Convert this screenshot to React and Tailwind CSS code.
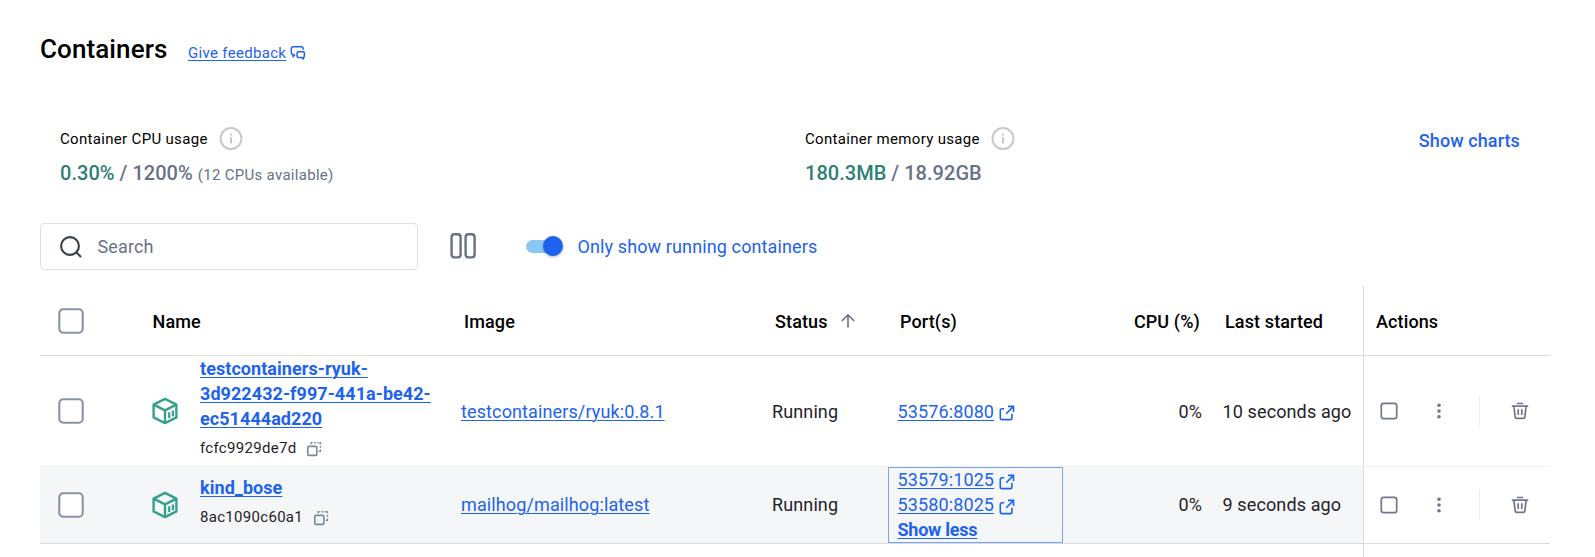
function FeedbackIcon() {
  return (
    <svg className="h-[16px] w-[16px]" viewBox="0 0 16 16" fill="none" stroke="#1d63ed" strokeWidth="1.5" strokeLinejoin="round">
      <path d="M5.2 9.8H4.8L3 11.8V9.6C2 9.4 1.3 8.8 1.3 7.8V3.5C1.3 2.4 1.9 1.8 3 1.8H11.4C12.5 1.8 13.1 2.4 13.1 3.5V4.8" />
      <path d="M8.3 6.8H13.2C14 6.8 14.4 7.2 14.4 8V11C14.4 11.7 14.1 12.1 13.5 12.3V14L11.4 12.4H8.3C7.5 12.4 7.1 12 7.1 11.2V8C7.1 7.2 7.5 6.8 8.3 6.8Z" />
    </svg>
  );
}

function InfoIcon() {
  return (
    <svg className="-mt-px h-[24px] w-[24px]" viewBox="0 0 24 24" fill="none" stroke="#c9c9c9">
      <circle cx="12" cy="11.6" r="10.5" strokeWidth="2" />
      <path d="M12 10.2V16.6" strokeWidth="2" />
      <path d="M12 6.4V8.4" strokeWidth="2" />
    </svg>
  );
}

function SearchIcon() {
  return (
    <svg className="h-[24px] w-[24px]" viewBox="0 0 24 24" fill="none" stroke="#393f49" strokeWidth="2.1">
      <circle cx="11" cy="11" r="8.9" />
      <path d="M17.2 17.2L22 22" />
    </svg>
  );
}

function ColumnsIcon() {
  return (
    <svg className="-mt-px h-[28px] w-[28px]" viewBox="0 0 28 28" fill="none" stroke="#677285" strokeWidth="2.4">
      <rect x="2.6" y="2.2" width="9" height="23.2" rx="2.8" />
      <rect x="16.6" y="2.2" width="9" height="23.2" rx="2.8" />
    </svg>
  );
}

function ArrowUp() {
  return (
    <svg className="-mt-px h-[16px] w-[16px]" viewBox="0 0 16 16" fill="none" stroke="#677285" strokeWidth="1.6">
      <path d="M8 14.6V1.8M1.8 8L8 1.8L14.2 8" />
    </svg>
  );
}

function CubeIcon() {
  return (
    <svg className="h-[28px] w-[28px]" viewBox="0 0 28 28" fill="none" stroke="#35a18b" strokeWidth="2.4" strokeLinejoin="round">
      <path d="M14 1.9L25.4 7.6V20.4L14 26.1L2.6 20.4V7.6Z" />
      <path d="M2.6 7.6L14 13.4L25.4 7.6M14 13.4V26.1" />
      <path d="M18.2 15.3V21M21.9 13.5V19.2" strokeWidth="2.2" />
    </svg>
  );
}

function CopyIcon() {
  return (
    <svg className="h-[16px] w-[16px]" viewBox="0 0 16 16" fill="none" stroke="#7d8798" strokeWidth="1.6">
      <rect x="1.8" y="5.4" width="9" height="9" rx="1" />
      <path d="M5.2 3.2V1.8H6.6M8.2 1.8H9.8M11.2 1.8H12.6M13.4 1.8H14.4V3.4M14.4 5V6.8M14.4 8.4V10.4H12.8" strokeWidth="1.4" />
    </svg>
  );
}

function ExternalIcon() {
  return (
    <svg className="h-[16px] w-[16px]" viewBox="0 0 16 16" fill="none" stroke="#1d63ed" strokeWidth="1.6">
      <path d="M5.2 3.7H3C1.9 3.7 1.3 4.3 1.3 5.4V12.9C1.3 14 1.9 14.6 3 14.6H11.2C12.3 14.6 12.9 14 12.9 12.9V8.8" />
      <path d="M9 1.4H14.5V7M14.5 1.4L7.2 8.7" />
    </svg>
  );
}

function TrashIcon() {
  return (
    <svg className="h-[18px] w-[18px]" viewBox="0 0 18 18" fill="none" stroke="#6f798b" strokeWidth="1.7">
      <path d="M0.8 4.1H17.2M5.8 1.5H12.2" />
      <path d="M2.9 4.2L4.1 14.6C4.2 15.8 4.8 16.4 5.8 16.4H12.2C13.2 16.4 13.8 15.8 13.9 14.6L15.1 4.2" />
      <path d="M7.2 7.2V13M10.8 7.2V13" />
    </svg>
  );
}

function Checkbox() {
  return (
    <svg className="ml-[17px] h-[28px] w-[28px]" viewBox="0 0 28 28" fill="none" stroke="#8993a5" strokeWidth="2.1">
      <rect x="2.3" y="2.3" width="23.4" height="23.4" rx="3.8" fill="#fff" />
    </svg>
  );
}

function Usage({ label, used, total, note, className }) {
  return (
    <div className={className}>
      <div className="flex h-[26px] items-center gap-[11px]">
        <span className="text-[15px] tracking-[0.32px] text-black">{label}</span>
        <InfoIcon />
      </div>
      <div className="mt-[6px] flex items-baseline text-[20px] leading-[30px] font-medium tracking-[0.03px] text-[#677285]">
        <span className="text-[#2e7f74]">{used}</span>
        <span className="whitespace-pre"> / {total}</span>
        {note && <span className="ml-[5px] text-[15px] font-normal tracking-[0.3px]">{note}</span>}
      </div>
    </div>
  );
}

const columns = "grid grid-cols-[112px_309px_311px_116px_175px_139px_161px_187px] grid-rows-[100%]";

const containers = [
  {
    name: ["testcontainers-ryuk-", "3d922432-f997-441a-be42-", "ec51444ad220"],
    id: "fcfc9929de7d",
    image: "testcontainers/ryuk:0.8.1",
    ports: ["53576:8080"],
    started: "10 seconds ago",
    height: "h-[111px]",
    line: "border-[#f0f1f2]",
    textPad: "",
  },
  {
    name: ["kind_bose"],
    id: "8ac1090c60a1",
    image: "mailhog/mailhog:latest",
    ports: ["53579:1025", "53580:8025"],
    expanded: true,
    started: "9 seconds ago",
    height: "h-[77px]",
    line: "border-[#dcdcde]",
    fill: "bg-[#f5f6f8]",
    textPad: "pb-px",
  },
];

const link = "text-[#1d63ed] underline decoration-1 underline-offset-[2px]";

function Row({ c }) {
  return (
    <div className={`${columns} ${c.height} shrink-0 items-center border-b ${c.line} ${c.fill ?? ""} text-[#1f2328]`}>
      <Checkbox />
      <div className="flex items-center">
        <span className="-ml-px"><CubeIcon /></span>
        <div className="ml-[21px] pb-[5px]">
          <div className={`font-bold tracking-[0.06px] ${link}`}>
            {c.name.map((part) => <div key={part}>{part}</div>)}
          </div>
          <div className="mt-[5px] flex items-center gap-[9.5px] text-[15px] tracking-[0.3px]">
            {c.id}
            <CopyIcon />
          </div>
        </div>
      </div>
      <div className={c.textPad}><a className={link}>{c.image}</a></div>
      <div className={c.textPad}>Running</div>
      <div className={`flex h-full flex-col justify-center pl-[9.5px] ${c.textPad} ${c.expanded ? "shadow-[inset_0_0_0_1px_#7ba4f4]" : ""}`}>
        {c.ports.map((p) => (
          <div key={p} className="flex items-center gap-[5px]">
            <a className={link}>{p}</a>
            <span className="mt-[4px]"><ExternalIcon /></span>
          </div>
        ))}
        {c.expanded && <a className={`font-bold tracking-[-0.25px] ${link}`}>Show less</a>}
      </div>
      <div className={`text-right ${c.textPad}`}>0%</div>
      <div className={`pl-[20.5px] whitespace-nowrap ${c.textPad}`}>{c.started}</div>
      <div className="flex h-full items-center border-l border-[#dcdcde] bg-white">
        <svg className="ml-[16px] h-[18px] w-[18px]" viewBox="0 0 18 18" fill="none" stroke="#6f798b" strokeWidth="1.7">
          <rect x="1.3" y="1.3" width="15.4" height="15.4" rx="2.4" />
        </svg>
        <svg className="ml-[39px] h-[16px] w-[4px]" viewBox="0 0 4 16" fill="#6f798b">
          <circle cx="2" cy="2.2" r="1.8" />
          <circle cx="2" cy="8" r="1.8" />
          <circle cx="2" cy="13.8" r="1.8" />
        </svg>
        <span className="ml-[38px] h-[30px] w-px bg-[#ebecee]" />
        <span className="ml-[31px]"><TrashIcon /></span>
      </div>
    </div>
  );
}

export default function App() {
  return (
    <div className="flex h-[557px] w-[1595px] flex-col overflow-hidden bg-white pr-[45px] pl-[40px] font-['Roboto',sans-serif]">
      <header className="flex h-[100px] items-baseline pt-[31px]">
        <h1 className="text-[26px] leading-[36px] font-medium tracking-[0.1px] text-black">Containers</h1>
        <a className={`ml-[20.5px] text-[15px] tracking-[0.32px] ${link}`}>Give feedback</a>
        <span className="ml-[4px] translate-y-[3px]"><FeedbackIcon /></span>
      </header>

      <section className="flex h-[123px] pt-[26px] pl-[20px]">
        <Usage className="w-[745px]" label="Container CPU usage" used="0.30%" total="1200%" note="(12 CPUs available)" />
        <Usage className="flex-1" label="Container memory usage" used="180.3MB" total="18.92GB" />
        <a className="mt-px mr-[30px] text-[18px] leading-[28px] font-medium tracking-[0.1px] text-[#1d63ed]">Show charts</a>
      </section>

      <div className="flex h-[47px] shrink-0 items-center text-[18px] tracking-[0.12px]">
        <div className="flex h-[47px] w-[378px] items-center rounded-[4px] border border-[#dfe0e2] pl-[18px]">
          <SearchIcon />
          <span className="-mt-px ml-[14.5px] text-[#677285]">Search</span>
        </div>
        <span className="ml-[31px]"><ColumnsIcon /></span>
        <span className="-mt-px ml-[49px] flex h-[20px] w-[37px] items-center justify-end rounded-full">
          <span className="h-[13px] w-[27px] rounded-l-full bg-[#8bc7f5]" />
          <span className="-ml-[10px] h-[20px] w-[20px] shrink-0 rounded-full bg-[#1d63ed] shadow-[0_1px_3px_rgba(0,0,0,0.3)]" />
        </span>
        <span className="-mt-px ml-[14.5px] text-[#1d63ed]">Only show running containers</span>
      </div>

      <main className="mt-[16px] flex flex-1 flex-col text-[18px] leading-[25px] tracking-[0.12px]">
        <div className={`${columns} h-[70px] shrink-0 items-center border-b border-[#dcdcde] font-medium text-black`}>
          <Checkbox />
          <div className="pt-px pl-[0.5px]">Name</div>
          <div className="pt-px pl-[3px]">Image</div>
          <div className="flex items-center gap-[12px] pt-px pl-[3px]">Status<ArrowUp /></div>
          <div className="pt-px pl-[12px]">Port(s)</div>
          <div className="pt-px pr-[2px] text-right">CPU (%)</div>
          <div className="pt-px pl-[23px]">Last started</div>
          <div className="flex h-full items-center border-l border-[#dcdcde] pt-px pl-[12px]">Actions</div>
        </div>
        {containers.map((c) => <Row key={c.id} c={c} />)}
        <div className={`${columns} flex-1`}>
          <div className="col-start-8 border-l border-[#dcdcde]" />
        </div>
      </main>
    </div>
  );
}
